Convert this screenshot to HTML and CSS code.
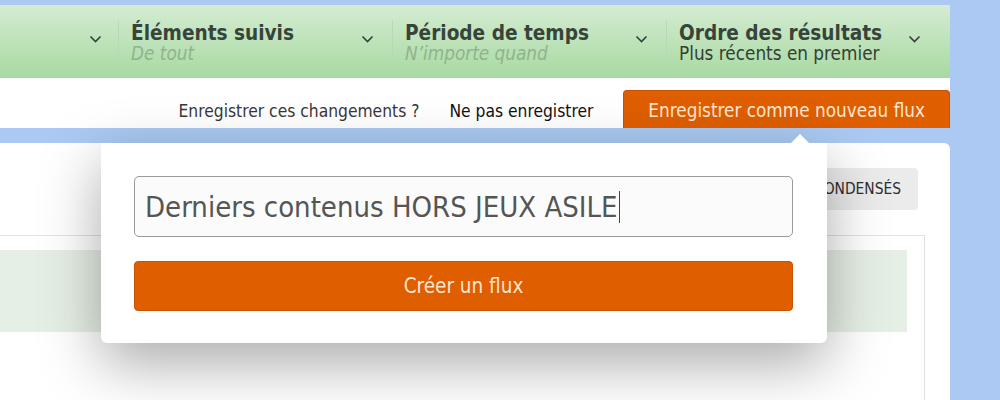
FILE: index.html
```html
<!DOCTYPE html>
<html lang="fr">
<head>
<meta charset="utf-8">
<title>Flux</title>
<link rel="stylesheet" href="styles.css">
</head>
<body>
<div class="page">
  <div class="topbar">
    <div class="filter first">
      <svg class="chev" viewBox="0 0 12 8"><path d="M1 1.5 L6 6.5 L11 1.5"/></svg>
    </div>
    <div class="filter">
      <div class="label">
        <div class="title">Éléments suivis</div>
        <div class="sub">De tout</div>
      </div>
      <svg class="chev" viewBox="0 0 12 8"><path d="M1 1.5 L6 6.5 L11 1.5"/></svg>
    </div>
    <div class="filter">
      <div class="label">
        <div class="title">Période de temps</div>
        <div class="sub">N’importe quand</div>
      </div>
      <svg class="chev" viewBox="0 0 12 8"><path d="M1 1.5 L6 6.5 L11 1.5"/></svg>
    </div>
    <div class="filter last">
      <div class="label">
        <div class="title">Ordre des résultats</div>
        <div class="sub set">Plus récents en premier</div>
      </div>
      <svg class="chev" viewBox="0 0 12 8"><path d="M1 1.5 L6 6.5 L11 1.5"/></svg>
    </div>
  </div>

  <div class="savebar">
    <span class="ask">Enregistrer ces changements ?</span>
    <a class="discard">Ne pas enregistrer</a>
    <a class="save-new">Enregistrer comme nouveau flux</a>
  </div>

  <div class="card">
    <div class="card-tools">
      <span class="tool-btn">Condensés</span>
    </div>
    <div class="panel">
      <div class="notice"></div>
    </div>
  </div>

  <div class="popup">
    <div class="field"><span class="value">Derniers contenus HORS JEUX ASILE</span><span class="caret"></span></div>
    <div class="create">Créer un flux</div>
  </div>
</div>
</body>
</html>
```

FILE: styles.css
```css
* { box-sizing: border-box; }
html, body { margin: 0; height: 100%; }
body {
  background: #abc9f2;
  font-family: "DejaVu Sans Condensed", Tahoma, "DejaVu Sans", sans-serif;
  color: #333;
  overflow: hidden;
}
.page {
  position: relative;
  width: 950px;
  padding-top: 5px;
  display: flex;
  flex-direction: column;
  height: 100%;
}
.topbar {
  height: 73px;
  display: flex;
  align-items: center;
  background: linear-gradient(#d4ecd2, #a8d9a1);
}
.filter {
  display: flex;
  align-items: center;
  width: 274px;
  height: 42px;
  border-left: 1px solid #b9d8b4;
  padding-left: 12px;
  padding-right: 18px;
}
.filter.first {
  flex: 1;
  border-left: 0;
  justify-content: flex-end;
  padding-right: 16px;
}
.filter.last { width: 284px; padding-right: 29px; }
.label { flex: 1; min-width: 0; padding-top: 2px; }
.title {
  font-weight: bold;
  font-size: 20.6px;
  line-height: 22px;
  color: #37443a;
  white-space: nowrap;
}
.sub {
  font-style: italic;
  font-size: 18.8px;
  line-height: 20px;
  color: #90b38d;
  white-space: nowrap;
}
.sub.set { font-style: normal; color: #344036; }
.chev {
  width: 13px;
  height: 8px;
  flex: none;
  fill: none;
  stroke: #34403a;
  stroke-width: 1.6;
  margin-bottom: 6px;
}
.savebar {
  height: 50px;
  background: #fff;
  display: flex;
  align-items: flex-end;
  justify-content: flex-end;
  gap: 30px;
  font-size: 17.3px;
}
.ask, .discard {
  height: 38px;
  display: flex;
  align-items: center;
  padding-top: 3px;
}
.ask { color: #383838; }
.discard { color: #111; }
.save-new {
  height: 38px;
  display: flex;
  align-items: center;
  padding: 2px 24px 0;
  background: #df5e00;
  border: 1px solid #c75200;
  border-bottom: 0;
  border-radius: 4px 4px 0 0;
  color: #fde7d2;
  font-size: 18.8px;
}
.card {
  margin-top: 15px;
  flex: 1;
  background: #fff;
  border-radius: 0 6px 0 0;
  display: flex;
  flex-direction: column;
}
.card-tools {
  display: flex;
  justify-content: flex-end;
  padding: 25px 32px 0 0;
  height: 92px;
}
.tool-btn {
  height: 42px;
  display: flex;
  align-items: center;
  padding: 0 17px 0 80px;
  background: #ebebeb;
  border-radius: 4px;
  font-size: 15.4px;
  text-transform: uppercase;
  color: #2e2e2e;
}
.panel {
  flex: 1;
  margin-right: 25px;
  border-top: 1px solid #e2e2e2;
  border-right: 1px solid #e2e2e2;
  padding: 14px 17px 0 0;
}
.notice {
  height: 82px;
  background: #e6efe6;
}
.popup {
  position: absolute;
  left: 101px;
  top: 143px;
  width: 726px;
  height: 200px;
  background: #fff;
  border-radius: 0 0 6px 6px;
  box-shadow: 0 20px 60px rgba(0, 0, 0, 0.34);
  padding: 33px 34px 0 33px;
  display: flex;
  flex-direction: column;
  gap: 24px;
}
.popup::before {
  content: "";
  position: absolute;
  top: -9px;
  left: 690px;
  border-left: 9px solid transparent;
  border-right: 9px solid transparent;
  border-bottom: 9px solid #fff;
}
.field {
  height: 61px;
  border: 1px solid #9a9a9a;
  border-radius: 5px;
  background: #fbfbfb;
  display: flex;
  align-items: center;
  padding-left: 10px;
  font-size: 29px;
  color: #555;
}
.caret {
  width: 1px;
  height: 32px;
  background: #444;
  margin-left: 1px;
}
.create {
  height: 50px;
  background: #df5e00;
  border: 1px solid #c95300;
  border-radius: 4px;
  display: flex;
  align-items: center;
  justify-content: center;
  font-size: 20.5px;
  color: #fde5cf;
}
```
